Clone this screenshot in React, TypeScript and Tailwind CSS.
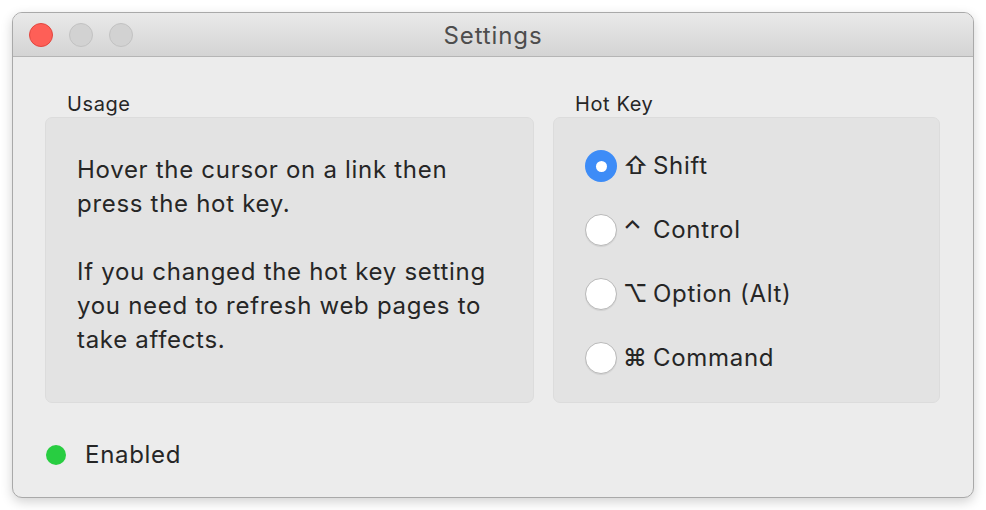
import React from "react";

const font = { fontFamily: "Inter, 'Noto Sans', 'Liberation Sans', sans-serif" };

const keys = [
  { sym: "⇧", label: "Shift", on: true },
  { sym: "⌃", label: "Control", on: false },
  { sym: "⌥", label: "Option (Alt)", on: false },
  { sym: "⌘", label: "Command", on: false },
];

function Radio({ on }: { on: boolean }) {
  if (on) {
    return (
      <span className="flex h-8 w-8 shrink-0 items-center justify-center rounded-full bg-[#3d8cf7]">
        <span className="h-[11px] w-[11px] rounded-full bg-white" />
      </span>
    );
  }
  return (
    <span className="h-8 w-8 shrink-0 rounded-full border border-[#b9b9b9] bg-white shadow-[0_1px_1px_rgba(0,0,0,0.08)]" />
  );
}

export default function App() {
  return (
    <div className="h-[510px] w-[986px] bg-white pl-3 pt-3" style={font}>
      <div className="flex h-[486px] w-[962px] flex-col overflow-hidden rounded-[10px] border border-[#a9a9a9] bg-[#ececec] shadow-[0_4px_12px_rgba(0,0,0,0.18)]">
        {/* title bar */}
        <div className="relative flex h-[44px] shrink-0 items-center border-b border-[#b5b5b5] bg-gradient-to-b from-[#e9e9e9] to-[#d4d4d4] pl-4">
          <div className="flex gap-4">
            <span className="h-6 w-6 rounded-full border border-[#e2463f] bg-[#fe5f57]" />
            <span className="h-6 w-6 rounded-full border border-[#c2c2c2] bg-[#d2d2d2]" />
            <span className="h-6 w-6 rounded-full border border-[#c2c2c2] bg-[#d2d2d2]" />
          </div>
          <div className="absolute inset-0 flex items-center justify-center pt-[2px] text-[24px] tracking-[0.9px] text-[#4d4d4d]">
            Settings
          </div>
        </div>

        {/* body */}
        <div className="flex gap-[19px] pl-[32px] pt-[35px]">
          <div className="flex w-[489px] flex-col">
            <div className="pl-[22px] text-[20px] leading-[24px] tracking-[0.6px] text-[#262626]">Usage</div>
            <div className="mt-[1px] h-[286px] rounded-[7px] border border-[#dcdcdc] bg-[#e3e3e3] pl-[31px] pt-[35px] text-[24px] leading-[34px] tracking-[0.7px] text-[#262626]">
              <p>Hover the cursor on a link then</p>
              <p>press the hot key.</p>
              <p className="mt-[34px]">If you changed the hot key setting</p>
              <p>you need to refresh web pages to</p>
              <p>take affects.</p>
            </div>
          </div>
          <div className="flex w-[387px] flex-col">
            <div className="pl-[22px] text-[20px] leading-[24px] tracking-[0.6px] text-[#262626]">Hot Key</div>
            <div className="mt-[1px] flex h-[286px] flex-col gap-[32px] rounded-[7px] border border-[#dcdcdc] bg-[#e3e3e3] pl-[31px] pt-[32px]">
              {keys.map((k) => (
                <div key={k.label} className="flex h-8 items-center text-[24px] tracking-[0.7px] text-[#262626]">
                  <Radio on={k.on} />
                  <span className="ml-[6px] w-[30px] font-medium">{k.sym}</span>
                  <span>{k.label}</span>
                </div>
              ))}
            </div>
          </div>
        </div>

        <div className="mt-[37px] flex items-center pl-[33px]">
          <span className="h-5 w-5 rounded-full bg-[#28cd41]" />
          <span className="ml-[19px] text-[24px] leading-[30px] tracking-[0.7px] text-[#262626]">Enabled</span>
        </div>
      </div>
    </div>
  );
}
